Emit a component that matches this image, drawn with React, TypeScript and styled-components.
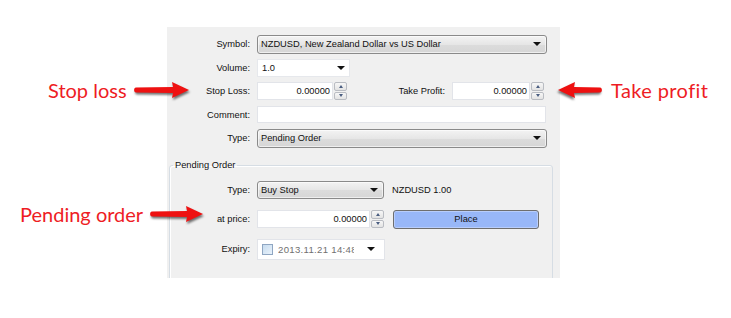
import React from 'react';
import styled, { createGlobalStyle } from 'styled-components';

const Global = createGlobalStyle`
    html, body {
        margin: 0;
        padding: 0;
        background: #ffffff;
    }
    * {
        box-sizing: border-box;
    }
`

const Arrow = ({ width, flip }: { width: number; flip?: boolean }) => {
    const head = width - 18;
    return (
        <ArrowSvg width={width} height={19} viewBox={`0 0 ${width} 19`} $flip={flip}>
            <path
                d={`M3 6.5 C0.5 6.5 0.5 11.5 3 11.5 L${head} 12 L${head - 1} 17 L${width - 2} 9 L${head - 1} 1 L${head} 6 Z`}
                fill="#ee1111"
            />
        </ArrowSvg>
    );
};

const Spinner = () => (
    <SpinBox>
        <SpinBtn><Tri $up /></SpinBtn>
        <SpinBtn><Tri /></SpinBtn>
    </SpinBox>
);

export default function App() {
    return (
        <Page>
            <Global />
            <Panel>
                <Form>
                    <Row>
                        <Label>Symbol:</Label>
                        <Select $w={290} $h={19}>
                            <span>NZDUSD, New Zealand Dollar vs US Dollar</span>
                            <Caret />
                        </Select>
                    </Row>
                    <Row>
                        <Label>Volume:</Label>
                        <Combo $w={93}>
                            <span>1.0</span>
                            <Caret />
                        </Combo>
                    </Row>
                    <Row>
                        <Label>Stop Loss:</Label>
                        <Field $w={76}>0.00000</Field>
                        <Spinner />
                        <Label $w={104}>Take Profit:</Label>
                        <Field $w={78}>0.00000</Field>
                        <Spinner />
                    </Row>
                    <Row>
                        <Label>Comment:</Label>
                        <Field $w={289} $h={17} />
                    </Row>
                    <Row>
                        <Label>Type:</Label>
                        <Select $w={290} $h={19}>
                            <span>Pending Order</span>
                            <Caret />
                        </Select>
                    </Row>
                </Form>
                <Group>
                    <Legend>Pending Order</Legend>
                    <GroupBody>
                        <Row>
                            <Label $w={87}>Type:</Label>
                            <Select $w={127} $h={18}>
                                <span>Buy Stop</span>
                                <Caret />
                            </Select>
                            <Info>NZDUSD 1.00</Info>
                        </Row>
                        <Row>
                            <Label $w={87}>at price:</Label>
                            <Field $w={113}>0.00000</Field>
                            <Spinner />
                            <PlaceButton>Place</PlaceButton>
                        </Row>
                        <Row $h={21}>
                            <Label $w={87}>Expiry:</Label>
                            <DateBox>
                                <Check />
                                <DateText>2013.11.21 14:48</DateText>
                                <Caret />
                            </DateBox>
                        </Row>
                    </GroupBody>
                </Group>
            </Panel>

            <Callout $top={78} $left={48}>
                <span>Stop loss</span>
                <Arrow width={58} />
            </Callout>
            <Callout $top={78} $left={556}>
                <Arrow width={47} flip />
                <TakeText>Take profit</TakeText>
            </Callout>
            <Callout $top={202} $left={20}>
                <span>Pending order</span>
                <Arrow width={56} />
            </Callout>
        </Page>
    );
}

const Page = styled.div`
    position: relative;
    width: 731px;
    height: 318px;
    padding: 27px 0 0 167px;
    font-family: "Liberation Sans", Arial, sans-serif;
    font-size: 9.3px;
    color: #111;
`
const Panel = styled.div`
    width: 393px;
    height: 251px;
    background: #f0f0f0;
    overflow: hidden;
    padding-top: 7px;
`
const Form = styled.div`
    display: flex;
    flex-direction: column;
    gap: 3.5px;
`
const Row = styled.div<{ $h?: number }>`
    display: flex;
    align-items: center;
    height: ${p => p.$h ?? 20}px;
`
const Label = styled.div<{ $w?: number }>`
    width: ${p => p.$w ?? 90}px;
    padding-right: 7px;
    text-align: right;
    white-space: nowrap;
`
const Select = styled.div<{ $w: number; $h: number }>`
    width: ${p => p.$w}px;
    height: ${p => p.$h}px;
    display: flex;
    align-items: center;
    justify-content: space-between;
    padding: 0 5px 0 3px;
    border: 1px solid #8a8a8a;
    border-radius: 3px;
    background: linear-gradient(#f3f3f3, #e6e6e6 50%, #dcdcdc 51%, #d6d6d6);
    box-shadow: inset 0 0 0 1px rgba(255, 255, 255, 0.6);
    white-space: nowrap;
`
const Combo = styled.div<{ $w: number }>`
    width: ${p => p.$w}px;
    height: 18px;
    display: flex;
    align-items: center;
    justify-content: space-between;
    padding: 0 4px 0 4px;
    background: #ffffff;
    border: 1px solid #e6e8ec;
`
const Caret = styled.span`
    width: 0;
    height: 0;
    border-left: 4px solid transparent;
    border-right: 4px solid transparent;
    border-top: 4px solid #111;
`
const Field = styled.div<{ $w: number; $h?: number }>`
    width: ${p => p.$w}px;
    height: ${p => p.$h ?? 18}px;
    display: flex;
    align-items: center;
    justify-content: flex-end;
    padding-right: 2px;
    background: #ffffff;
    border: 1px solid #e2e4e9;
`
const SpinBox = styled.div`
    width: 15px;
    height: 18px;
    display: flex;
    flex-direction: column;
    gap: 1px;
    padding: 0 1px;
`
const SpinBtn = styled.div`
    flex: 1;
    display: flex;
    align-items: center;
    justify-content: center;
    border: 1px solid #b9bcc2;
    border-radius: 2px;
    background: linear-gradient(#f7f7f7, #e3e3e3);
`
const Tri = styled.span<{ $up?: boolean }>`
    width: 0;
    height: 0;
    border-left: 2.5px solid transparent;
    border-right: 2.5px solid transparent;
    ${p => p.$up ? 'border-bottom: 3px solid #4a5d80;' : 'border-top: 3px solid #4a5d80;'}
`
const Group = styled.fieldset`
    margin: 11px 0 0 2px;
    width: 384px;
    height: 140px;
    padding: 0;
    border: 1px solid #d6dde4;
    border-radius: 3px;
    box-shadow: inset 1px 1px 0 #ffffff;
`
const Legend = styled.legend`
    margin-left: 3px;
    padding: 0 2px;
    line-height: 12px;
`
const GroupBody = styled.div`
    display: flex;
    flex-direction: column;
    gap: 9.5px;
    padding-top: 8.5px;
`
const Info = styled.span`
    margin-left: 8px;
`
const PlaceButton = styled.div`
    margin-left: 8px;
    width: 146px;
    height: 19px;
    display: flex;
    align-items: center;
    justify-content: center;
    border: 1px solid #6e6e6e;
    border-radius: 3px;
    background: #98b7f8;
    box-shadow: inset 0 0 0 1px #b8cdfb;
`
const DateBox = styled.div`
    width: 128px;
    height: 21px;
    display: flex;
    align-items: center;
    padding: 0 9px 0 4px;
    background: #ffffff;
    border: 1px solid #e2e4e9;
`
const Check = styled.span`
    width: 11px;
    height: 11px;
    border: 1px solid #8fa6c2;
    background: linear-gradient(135deg, #c7dcef, #e9f2fb);
    flex-shrink: 0;
`
const DateText = styled.span`
    margin-left: 5px;
    width: 76px;
    overflow: hidden;
    white-space: nowrap;
    color: #707070;
    font-size: 9.6px;
    letter-spacing: 0.3px;
    margin-right: auto;
`
const Callout = styled.div<{ $top: number; $left: number }>`
    position: absolute;
    top: ${p => p.$top}px;
    left: ${p => p.$left}px;
    height: 24px;
    display: flex;
    align-items: center;
    gap: 6px;
    font-family: Lato, "Open Sans", sans-serif;
    font-size: 20px;
    color: #ee1c24;
    white-space: nowrap;
`
const TakeText = styled.span`
    margin-left: 2px;
    letter-spacing: 0.4px;
`
const ArrowSvg = styled.svg<{ $flip?: boolean }>`
    display: block;
    overflow: visible;
    filter: drop-shadow(1.5px 2px 1px rgba(0, 0, 0, 0.55));
    transform: ${p => p.$flip ? 'scaleX(-1)' : 'none'};
`
